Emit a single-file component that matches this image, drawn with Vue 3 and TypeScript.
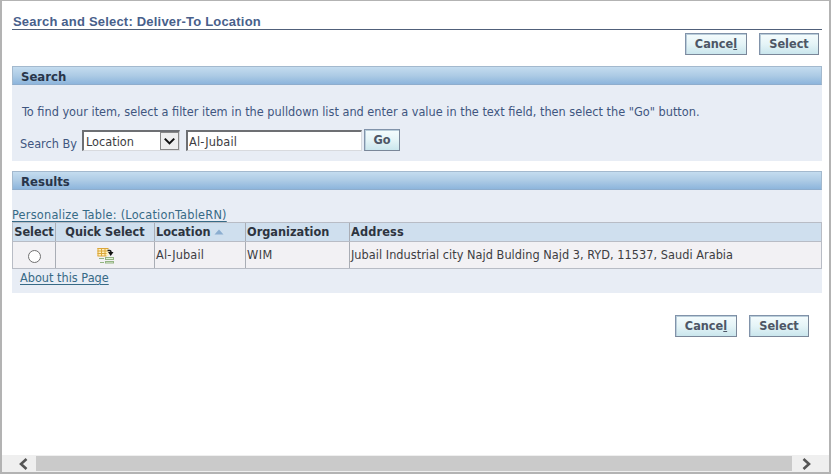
<script setup lang="ts">
import { ref } from 'vue'

interface LocationRow {
  location: string
  organization: string
  address: string
}

const keyword = ref('Al-Jubail')
const picked = ref(-1)
const rows: LocationRow[] = [
  {
    location: 'Al-Jubail',
    organization: 'WIM',
    address: 'Jubail Industrial city Najd Bulding Najd 3, RYD, 11537, Saudi Arabia',
  },
]
</script>

<template>
  <div class="window">
    <main class="content">
      <h1>Search and Select: Deliver-To Location</h1>
      <div class="actions top">
        <button class="btn cancel">Cance<u>l</u></button>
        <button class="btn select">Select</button>
      </div>

      <section class="panel search">
        <h2>Search</h2>
        <p class="hint">To find your item, select a filter item in the pulldown list and enter a value in the text field, then select the "Go" button.</p>
        <div class="form">
          <label class="by">Search By</label>
          <div class="combo">
            <span class="value">Location</span>
            <span class="drop">
              <svg width="18" height="18" viewBox="0 0 18 18"><path d="M4 6.500 9 11.500l5-5" fill="none" stroke="#111" stroke-width="2.200" /></svg>
            </span>
          </div>
          <input v-model="keyword" class="field" type="text" />
          <button class="btn go">Go</button>
        </div>
      </section>

      <section class="panel results">
        <h2>Results</h2>
        <a class="link personalize">Personalize Table: (LocationTableRN)</a>
        <div class="grid">
          <div class="row head">
            <div class="cell mid">Select</div>
            <div class="cell mid">Quick Select</div>
            <div class="cell">
              Location
              <svg class="sort" width="10" height="6" viewBox="0 0 10 6"><path d="M0.500 5.500 5 0.500l4.500 5z" fill="#8caed0" /></svg>
            </div>
            <div class="cell">Organization</div>
            <div class="cell wide">Address</div>
          </div>
          <div v-for="(row, i) in rows" :key="row.location" class="row body">
            <div class="cell mid"><i class="radio" :class="{ on: picked === i }" @click="picked = i"></i></div>
            <div class="cell mid">
              <svg class="quick" width="17" height="17" viewBox="0 0 17 17">
                <rect x="0.500" y="1" width="11" height="8" fill="#fff0bd" />
                <path d="M0.500 1.500h11M0.500 4h10M0.500 6.500h9M0.500 9h9M1 1v8M4.500 1v8M8 1v8" fill="none" stroke="#dba63a" />
                <path d="M10.500 3.500h2q1.500 0 1.500 2" fill="none" stroke="#111" stroke-width="1.500" />
                <path d="M11 5h5.500L13.700 9z" fill="#111" />
                <path d="M2 11.500h5M3 15.500h4" stroke="#94b483" />
                <rect x="8.500" y="10.500" width="8" height="2" fill="#e3f1d6" stroke="#94b483" />
                <rect x="8.500" y="14.500" width="8" height="1.500" fill="#e3f1d6" stroke="#94b483" />
              </svg>
            </div>
            <div class="cell wide">{{ row.location }}</div>
            <div class="cell org">{{ row.organization }}</div>
            <div class="cell addr">{{ row.address }}</div>
          </div>
        </div>
        <a class="link about">About this Page</a>
      </section>

      <div class="actions bottom">
        <button class="btn cancel">Cance<u>l</u></button>
        <button class="btn select">Select</button>
      </div>
    </main>

    <div class="scrollbar">
      <span class="arrow left"><svg width="10" height="12" viewBox="0 0 10 12"><path d="M8.500 1 3 6l5.500 5" fill="none" stroke="#555" stroke-width="2.600" /></svg></span>
      <span class="thumb"></span>
      <span class="arrow right"><svg width="10" height="12" viewBox="0 0 10 12"><path d="M1.500 1 7 6l-5.500 5" fill="none" stroke="#555" stroke-width="2.600" /></svg></span>
    </div>
  </div>
</template>

<style>
body { background: #fff; overflow: hidden; }
</style>

<style scoped>
* { box-sizing: border-box; }
.window {
  width: 831px;
  height: 474px;
  border: 2px solid #b3b3b3;
  border-top-width: 1px;
  background: #fff;
  display: flex;
  flex-direction: column;
  font: 12.6px/16px "DejaVu Sans Condensed", "DejaVu Sans", sans-serif;
  font-stretch: condensed;
  color: #3d3d42;
  white-space: nowrap;
}
.content { flex: 1; padding: 12px 7px 0 10px; display: flex; flex-direction: column; }
h1 {
  margin: 0;
  height: 17px;
  border-bottom: 1px solid #50607a;
  padding-left: 1px;
  font: bold 13px/17px "Liberation Sans", Arial, sans-serif;
  letter-spacing: 0.2px;
  color: #48608b;
}
.actions { display: flex; gap: 12px; justify-content: flex-end; }
.top { padding: 3px 3px 0 0; }
.bottom { padding: 22px 13px 0 0; }
.btn {
  height: 22px;
  padding: 0;
  border: 1px solid #8193aa;
  border-right-color: #7a8799;
  border-bottom-color: #7a8799;
  border-radius: 0;
  background: linear-gradient(#f5fcfd, #e5f4f7 50%, #cae6ed);
  box-shadow: inset 1px 1px #b9cdda;
  font: bold 12.6px/18px "DejaVu Sans Condensed", "DejaVu Sans", sans-serif;
  font-stretch: condensed;
  color: #4d5666;
}
.cancel { width: 62px; }
.select { width: 60px; }
.go { width: 36px; margin-left: 2px; }
.panel { background: #e8edf5; }
h2 {
  margin: 0;
  height: 19px;
  padding-left: 8px;
  border: 1px solid #a3b9ce;
  border-bottom-color: #8eadcd;
  background: linear-gradient(#c4dcef, #adcbe5 50%, #8db5dc);
  font: bold 13px/19px "DejaVu Sans Condensed", "DejaVu Sans", sans-serif;
  font-stretch: condensed;
  color: #28354a;
}
.search { margin-top: 11px; height: 95px; }
.hint { margin: 19px 0 0 10px; color: #3f5680; }
.form { display: flex; margin: 9px 0 0 8px; height: 22px; }
.by { width: 62px; padding-top: 7px; color: #3f5680; }
.combo, .field {
  height: 21px;
  margin-top: 1px;
  border: 1px solid #d8dade;
  border-top: 2px solid #6d6f73;
  border-left: 2px solid #6d6f73;
  background: #fff;
}
.combo { width: 98px; display: flex; justify-content: space-between; padding-left: 2px; }
.value { line-height: 19px; }
.drop { width: 19px; height: 18px; border: 1px solid #888; background: #eee; display: flex; align-items: center; justify-content: center; }
.field {
  width: 176px;
  margin-left: 6px;
  padding: 0 0 0 1px;
  border-radius: 0;
  outline: 0;
  font: 12.6px/18px "DejaVu Sans Condensed", "DejaVu Sans", sans-serif;
  font-stretch: condensed;
  letter-spacing: 0.15px;
  color: #3d3d42;
}
.results { margin-top: 10px; height: 122px; }
.link { display: block; color: #376a86; text-decoration: underline; text-underline-offset: 2px; text-decoration-thickness: 1px; }
.personalize { padding-top: 17px; height: 32px; letter-spacing: 0.23px; }
.grid { border: 1px solid #b8bcc5; height: 47px; }
.row { display: grid; grid-template-columns: 42px 99px 91px 104px 1fr; }
.cell { display: flex; align-items: center; padding-left: 1px; border-left: 1px solid #a9adb5; }
.cell:first-child { border-left: 0; }
.mid { justify-content: center; padding: 0; }
.wide { letter-spacing: 0.15px; }
.org { letter-spacing: 0.5px; }
.addr { letter-spacing: 0.03px; }
.head { height: 19px; background: #cfdfee; border-bottom: 1px solid #b8bcc5; font-weight: bold; color: #2d343f; }
.body { height: 26px; background: #f2f1f4; }
.sort { margin-left: 3px; }
.radio { width: 13px; height: 13px; border: 1px solid #707070; border-radius: 50%; background: #fff; margin-top: 2px; }
.radio.on { box-shadow: inset 0 0 0 3px #fff; background: #333; }
.about { padding: 1px 0 0 8px; }
.scrollbar { height: 17px; background: #efefef; display: flex; padding: 1px 0 1px; }
.arrow { width: 34px; display: flex; align-items: center; }
.left { padding-left: 16px; }
.right { padding-left: 10px; }
.thumb { width: 756px; background: #cacaca; }
</style>
